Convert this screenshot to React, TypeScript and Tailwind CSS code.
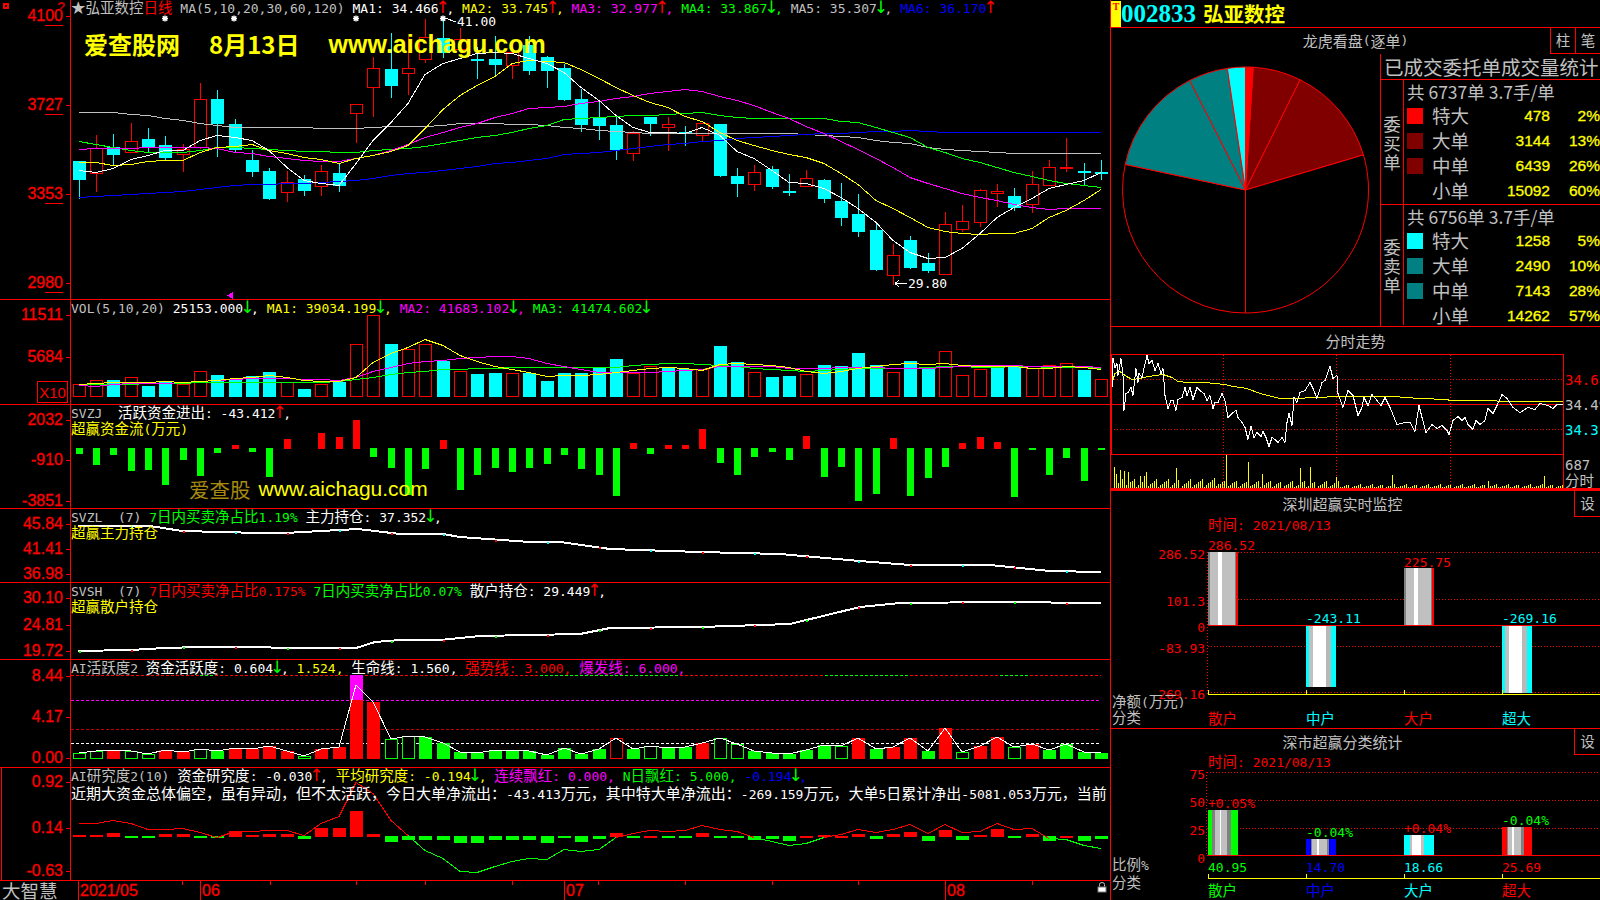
import React from 'react';

const RED = '#ff0000';
const CYAN = '#00ffff';
const GREEN = '#00ff00';
const YELLOW = '#ffff00';
const MAGENTA = '#ff00ff';
const BLUE = '#0000ff';
const GRAY = '#c0c0c0';

const cGray = 'text-[#c0c0c0]';
const cWhite = 'text-white';
const cRed = 'text-[#ff0000]';
const cGreen = 'text-[#00ff00]';
const cYellow = 'text-[#ffff00]';
const cMagenta = 'text-[#ff00ff]';
const cBlue = 'text-[#0000ff]';
const cCyan = 'text-[#00ffff]';

type Part = [string, string];

// the original mixes a half width latin face with a wider CJK face
const Rich = ({ parts, wide }: { parts: Part[]; wide?: boolean }) => (
  <>
    {parts.map(([text, color], i) =>
      text.split(/([\x20-\x7e]+)/).map((piece, j) => {
        const key = `${i}-${j}`;
        if (piece === '') return null;
        if (piece === '↑' || piece === '↓') {
          return (
            <span key={key} className={`inline-block w-[7.8px] font-['DejaVu_Sans',sans-serif] text-[17px] leading-[10px] ${color}`}>
              <span className="ml-[-3px]">{piece}</span>
            </span>
          );
        }
        if (/^[\x20-\x7e]+$/.test(piece)) {
          return (
            <span key={key} className={`font-['DejaVu_Sans_Mono',monospace] text-[13px] ${color}`}>
              {piece}
            </span>
          );
        }
        return (
          <span key={key} className={`${wide ? 'text-[15px]' : 'text-[14.5px]'} ${color}`}>
            {piece}
          </span>
        );
      }),
    )}
  </>
);

const X = (i: number) => Math.round(78.6 + 17.33 * i);
const poly = (pts: number[][]) => pts.map((p) => p.join(',')).join(' ');
const series = (ys: number[], f: (v: number) => number) => ys.map((v, i) => [X(i), Math.round(f(v)) + 0.5]);

// candles: [color, top, bottom, high, low], in 3x crop units
const candles: [string, number, number, number, number][] = [
  ['c', 484, 540, 484, 597], ['r', 443, 520, 405, 575], ['c', 441, 465, 402, 495], ['r', 424, 456, 370, 458],
  ['c', 417, 445, 384, 458], ['c', 435, 474, 408, 482], ['r', 446, 461, 432, 516], ['r', 298, 440, 250, 447],
  ['c', 297, 372, 270, 470], ['c', 372, 450, 357, 458], ['c', 480, 516, 450, 530], ['c', 513, 597, 505, 600],
  ['r', 547, 575, 513, 605], ['c', 537, 573, 526, 588], ['r', 514, 557, 495, 587], ['c', 519, 557, 491, 576],
  ['r', 313, 338, 313, 428], ['r', 205, 260, 172, 351], ['c', 207, 258, 99, 294], ['r', 205, 218, 110, 285],
  ['r', 110, 178, 58, 188], ['c', 113, 158, 50, 173], ['r', 118, 148, 85, 160], ['c', 177, 183, 140, 237],
  ['c', 177, 195, 108, 228], ['r', 155, 195, 130, 237], ['c', 135, 213, 108, 224], ['c', 171, 213, 168, 264],
  ['c', 204, 300, 192, 303], ['c', 297, 375, 267, 396], ['c', 353, 378, 305, 420], ['c', 375, 450, 350, 480],
  ['r', 400, 458, 393, 483], ['c', 351, 372, 351, 408], ['r', 373, 381, 351, 453], ['c', 396, 402, 378, 438],
  ['r', 370, 405, 368, 424], ['c', 372, 528, 372, 530], ['c', 528, 552, 504, 591], ['r', 517, 551, 495, 573],
  ['c', 507, 561, 498, 567], ['c', 573, 579, 522, 588], ['r', 533, 557, 510, 561], ['c', 540, 597, 537, 609],
  ['c', 603, 654, 549, 678], ['c', 642, 696, 582, 711], ['c', 690, 810, 666, 813], ['r', 766, 824, 732, 855],
  ['c', 720, 804, 708, 807], ['c', 789, 813, 759, 819], ['r', 673, 821, 636, 825], ['r', 664, 688, 615, 696],
  ['r', 571, 665, 567, 681], ['r', 574, 579, 552, 621], ['c', 588, 624, 564, 633], ['r', 553, 611, 513, 639],
  ['r', 502, 554, 480, 558], ['r', 501, 504, 414, 516], ['c', 513, 518, 489, 555], ['c', 516, 520, 480, 540],
];

const ma1 = [510, 515, 505, 478, 465, 450, 450, 420, 406, 410, 420, 450, 500, 540, 550, 555, 490, 420, 365, 310, 222, 190, 175, 160, 155, 160, 175, 190, 215, 260, 300, 345, 380, 395, 396, 398, 381, 405, 452, 475, 510, 547, 548, 565, 590, 625, 665, 720, 755, 775, 772, 745, 700, 650, 620, 595, 565, 552, 540, 517];
const ma2 = [487, 487, 494, 492, 484, 481, 481, 455, 440, 437, 432, 450, 460, 470, 478, 488, 475, 465, 452, 435, 385, 328, 285, 255, 228, 190, 180, 182, 185, 208, 235, 262, 285, 305, 322, 347, 362, 395, 420, 435, 450, 463, 472, 490, 520, 552, 600, 625, 650, 680, 692, 700, 703, 700, 698, 685, 652, 630, 600, 568];
const ma3 = [448, 445, 445, 445, 440, 440, 440, 440, 445, 455, 460, 468, 475, 480, 482, 484, 475, 465, 450, 432, 412, 395, 380, 368, 352, 340, 325, 322, 318, 310, 303, 295, 288, 280, 273, 268, 272, 287, 300, 315, 335, 355, 378, 400, 423, 447, 475, 500, 530, 548, 565, 578, 590, 600, 612, 620, 628, 625, 625, 625];
const ma4 = [424, 432, 440, 450, 455, 456, 455, 450, 442, 442, 445, 448, 450, 452, 453, 457, 457, 451, 448, 444, 437, 430, 420, 412, 405, 395, 385, 375, 358, 355, 350, 348, 346, 344, 342, 340, 337, 345, 352, 355, 355, 355, 355, 355, 362, 365, 380, 395, 410, 440, 457, 475, 487, 500, 515, 528, 540, 550, 555, 562];
const ma5 = [337, 337, 337, 342, 346, 353, 360, 368, 375, 380, 380, 380, 380, 380, 383, 385, 385, 380, 378, 377, 377, 375, 370, 370, 370, 372, 373, 375, 382, 385, 390, 392, 396, 398, 398, 398, 398, 398, 398, 398, 400, 400, 403, 405, 408, 410, 420, 425, 430, 442, 447, 450, 452, 455, 458, 458, 458, 458, 458, 458];
const ma6 = [590, 587, 585, 582, 578, 575, 572, 567, 560, 555, 553, 552, 550, 548, 545, 542, 540, 535, 525, 520, 515, 510, 505, 498, 490, 485, 480, 473, 462, 460, 455, 450, 445, 438, 433, 428, 422, 420, 415, 410, 408, 405, 403, 400, 398, 397, 394, 392, 391, 393, 397, 397, 397, 397, 397, 397, 397, 397, 397, 397];

const volTops: [string, number][] = [
  ['r', 268], ['r', 256], ['c', 255], ['r', 247], ['c', 272], ['c', 257], ['r', 268], ['r', 229], ['c', 240], ['c', 255],
  ['c', 243], ['c', 232], ['r', 262], ['c', 282], ['r', 268], ['c', 260], ['r', 148], ['r', 60], ['c', 147], ['r', 163],
  ['r', 148], ['c', 197], ['r', 229], ['c', 237], ['c', 233], ['r', 235], ['c', 235], ['c', 258], ['c', 234], ['c', 234],
  ['c', 215], ['c', 192], ['r', 235], ['r', 213], ['c', 218], ['c', 222], ['r', 222], ['c', 153], ['c', 201], ['r', 232],
  ['c', 246], ['c', 243], ['r', 238], ['c', 210], ['c', 213], ['c', 174], ['c', 210], ['r', 232], ['c', 198], ['c', 216],
  ['r', 169], ['r', 241], ['r', 223], ['c', 210], ['c', 210], ['r', 220], ['r', 211], ['r', 205], ['c', 225], ['r', 253],
];
const volA = [268, 265, 262, 260, 260, 258, 260, 258, 254, 250, 246, 240, 245, 255, 258, 258, 245, 200, 175, 155, 133, 150, 180, 198, 212, 222, 232, 242, 240, 240, 238, 232, 225, 220, 217, 218, 224, 207, 205, 208, 210, 215, 228, 235, 229, 218, 212, 208, 205, 208, 205, 210, 213, 212, 212, 220, 218, 214, 216, 222];
const volB = [270, 272, 268, 263, 265, 263, 262, 258, 255, 252, 250, 248, 250, 253, 253, 255, 245, 228, 215, 205, 198, 195, 190, 187, 183, 182, 190, 205, 212, 222, 232, 232, 232, 230, 229, 226, 222, 214, 212, 212, 214, 218, 220, 220, 216, 215, 217, 219, 218, 218, 215, 212, 209, 209, 209, 212, 214, 212, 214, 216];
const volC = [268, 268, 267, 266, 265, 265, 264, 262, 261, 262, 262, 262, 260, 260, 260, 258, 252, 245, 236, 232, 228, 223, 222, 220, 218, 217, 217, 217, 217, 217, 215, 215, 211, 208, 205, 205, 208, 210, 212, 218, 222, 226, 228, 224, 222, 220, 218, 218, 218, 215, 212, 214, 215, 215, 214, 214, 216, 216, 216, 218];

const svzj = [476, 510, 480, 528, 525, 570, 495, 543, 474, 450, 471, 546, 432, 459, 414, 426, 375, 486, 519, 600, 522, 435, 585, 540, 519, 531, 519, 507, 480, 522, 540, 603, 444, 477, 450, 450, 402, 504, 540, 486, 471, 495, 423, 546, 516, 618, 597, 429, 603, 549, 516, 444, 426, 441, 606, 465, 540, 489, 558, 465];

// 活跃度 bars: [color, s solid / o outline, top in 3x crop units]
const active: [string, string, number][] = [
  ['g', 'o', 730], ['g', 'o', 724], ['r', 's', 720], ['g', 'o', 724], ['g', 'o', 733], ['r', 's', 720], ['r', 's', 726], ['g', 'o', 718], ['g', 's', 724], ['r', 's', 714],
  ['r', 's', 718], ['r', 's', 708], ['r', 's', 723], ['g', 'o', 739], ['r', 's', 717], ['r', 's', 711], ['r', 's', 570], ['r', 's', 576], ['g', 'o', 688], ['g', 'o', 679],
  ['g', 's', 681], ['g', 's', 699], ['g', 's', 726], ['g', 's', 729], ['g', 's', 720], ['g', 's', 720], ['g', 's', 723], ['g', 's', 735], ['g', 's', 714], ['g', 's', 732],
  ['g', 's', 717], ['r', 'o', 685], ['g', 's', 717], ['g', 'o', 707], ['g', 's', 714], ['g', 's', 711], ['r', 's', 699], ['g', 'o', 685], ['g', 'o', 703], ['g', 's', 723],
  ['g', 's', 729], ['g', 's', 732], ['g', 's', 720], ['g', 's', 705], ['g', 'o', 709], ['r', 's', 684], ['g', 's', 717], ['r', 's', 711], ['r', 's', 684], ['g', 's', 723],
  ['r', 's', 654], ['g', 'o', 727], ['r', 's', 708], ['r', 's', 681], ['g', 'o', 712], ['r', 's', 702], ['g', 's', 720], ['g', 's', 702], ['g', 's', 726], ['g', 's', 729],
];

// 研究度 bars, height above (+) or below (-) the zero line, px
const study = [2, 1.5, 4, -2, -1, 3, 3, -2, -2, 6, 2, 3, 3, -3, 9, 9, 26, 3, -6, -4, -4, -4, -7, -7, -4, -4, -4, -7, -1, -6, -3, 4, -1, 1, -2, -1, 4, -2, -1, -4, -3, -5, 1, 2, 1, 3, -3, 3, 5, -5, 7, -4, 2, 8, -2, 3, -5, 1, -5, -3];
const studyLine = [189, 189, 181, 190, 208, 208, 205, 217, 230, 214, 214, 211, 211, 225, 190, 167, 66, 100, 180, 225, 270, 295, 333, 337, 318, 303, 295, 298, 0, 0, 0, 0, 0, 0, 0, 0, 0, 0, 0, 0, 0, 0, 0, 0, 0, 0, 0, 0, 0, 0, 0, 0, 0, 0, 0, 0, 0, 0, 0, 0].map((v) => 760 + v / 3);
[597, 604, 596, 560, 550, 541, 544, 540, 526, 536, 542, 562, 573, 585, 578, 560, 552, 538, 547, 536, 523, 550, 523, 547, 543, 520, 538, 535, 565, 567, 585, 593].forEach((v, i) => {
  studyLine[28 + i] = 650 + v / 3;
});

const fenshi = [[35, 185], [38, 100], [45, 125], [50, 115], [55, 150], [62, 98], [68, 150], [72, 255], [78, 205], [85, 200], [92, 185], [100, 210], [108, 130], [113, 170], [118, 145], [125, 155], [132, 130], [140, 90], [147, 115], [155, 105], [165, 135], [175, 115], [182, 145], [190, 130], [196, 210], [205, 250], [213, 225], [220, 225], [227, 255], [235, 222], [245, 215], [255, 185], [262, 210], [270, 185], [278, 222], [290, 185], [300, 195], [312, 205], [320, 225], [330, 210], [340, 250], [345, 232], [355, 230], [365, 205], [375, 225], [385, 275], [395, 265], [407, 255], [415, 275], [425, 290], [435, 305], [443, 343], [452, 303], [462, 335], [472, 320], [482, 333], [490, 318], [497, 335], [507, 362], [515, 335], [525, 342], [535, 350], [545, 335], [555, 350], [560, 290], [567, 265], [577, 300], [582, 215], [590, 232], [600, 200], [615, 195], [630, 172], [640, 190], [652, 218], [665, 170], [675, 165], [690, 122], [700, 160], [710, 150], [715, 205], [730, 245], [745, 195], [760, 210], [775, 270], [785, 245], [792, 215], [805, 240], [815, 208], [830, 225], [842, 240], [855, 215], [870, 245], [890, 298], [915, 290], [930, 290], [945, 318], [958, 240], [965, 275], [978, 320], [995, 298], [1010, 310], [1025, 300], [1040, 315], [1048, 328], [1058, 285], [1075, 272], [1085, 285], [1095, 275], [1105, 298], [1118, 312], [1128, 285], [1140, 298], [1155, 285], [1165, 250], [1180, 265], [1190, 240], [1205, 208], [1222, 220], [1240, 245], [1260, 262], [1285, 245], [1305, 252], [1320, 235], [1345, 240], [1360, 248], [1370, 238], [1390, 238]];
const fenshiAvg = [[35, 170], [45, 145], [60, 138], [75, 150], [95, 162], [120, 160], [145, 152], [190, 148], [215, 157], [235, 167], [265, 170], [315, 172], [375, 176], [400, 183], [440, 190], [480, 204], [540, 219], [580, 220], [650, 216], [710, 213], [880, 214], [960, 218], [1040, 221], [1050, 224], [1150, 224], [1230, 228], [1390, 228]];
const fenshiSpikes: Record<number, number> = { 380: 390, 443: 410, 226: 430, 600: 430, 628: 427, 487: 447, 139: 440, 40: 425, 60: 435, 340: 460, 710: 455, 878: 450, 1162: 468, 1333: 453, 72: 437, 50: 447, 84: 440, 118: 452, 130: 452 };
const fenshiBars = Array.from({ length: 226 }, (_, i) => {
  const zx = 36 + i * 6;
  const spike = Object.keys(fenshiSpikes).find((k) => Math.abs(Number(k) - zx) < 3);
  const room = zx < 360 ? 28 : zx < 720 ? 22 : 11;
  const top = spike ? fenshiSpikes[Number(spike)] : 490 - ((i * 37) % 17) * (room / 17) - 2;
  return { x: Math.round(1100 + zx / 3), top: Math.round(325 + top / 3) };
});

const Panel = ({
  top,
  className,
  ticks,
  legend,
  draw,
  over,
  axis,
  boxed,
  underline,
  wideSecond,
}: {
  top: number;
  className: string;
  ticks: [string, number][];
  legend: Part[][];
  draw: React.ReactNode;
  over?: React.ReactNode;
  axis?: React.ReactNode;
  boxed?: boolean;
  underline?: boolean;
  wideSecond?: boolean;
}) => {
  const h = Number(className.match(/\d+/)![0]) - 1;
  return (
    <div className={`flex shrink-0 border-b border-[#ff0000] ${className}`}>
      <div className={`relative shrink-0 border-r border-[#ff0000] ${boxed ? 'ml-px w-[70px] border-l' : 'w-[71px]'}`}>
        {ticks.map(([label, y]) => (
          <React.Fragment key={label}>
            <div
              className="absolute right-[7px] -translate-y-1/2 font-['Liberation_Sans',sans-serif] text-[16px] leading-[16px] text-[#ff0000] [-webkit-text-stroke:0.3px_#ff0000]"
              style={{ top: y - top }}
            >
              {label}
            </div>
            {underline && <div className="absolute right-[7px] h-px w-[18px] bg-[#ff0000]" style={{ top: y - top + 9 }} />}
            <div className="absolute right-0 h-px w-[4px] bg-[#ff0000]" style={{ top: y - top }} />
          </React.Fragment>
        ))}
        {axis}
      </div>
      <div className="relative flex-1 overflow-hidden">
        <svg className="block h-full w-full" viewBox={`71 ${top} 1039 ${h}`} shapeRendering="crispEdges">
          {draw}
        </svg>
        <div className="absolute left-0 top-[-2px] w-full font-['Noto_Sans_CJK_SC',sans-serif] leading-[16px]">
          {legend.map((line, i) => (
            <div key={i} className={`h-[16px] whitespace-pre ${wideSecond && i === 1 ? 'mt-[2px]' : ''}`}>
              <Rich parts={line} wide={wideSecond && i === 1} />
            </div>
          ))}
        </div>
        {over}
      </div>
    </div>
  );
};

const Legend = { up: ['↑', cRed] as Part, down: ['↓', cGreen] as Part };

const MainDraw = () => (
  <>
    {candles.map(([c, t, b, hi, lo], i) => {
      const x = X(i);
      const color = c === 'r' ? RED : CYAN;
      const top = Math.round(t / 3);
      const bot = Math.round(b / 3);
      return (
        <g key={i}>
          <rect x={x} y={Math.round(hi / 3)} width={1} height={Math.round(lo / 3) - Math.round(hi / 3)} fill={color} />
          {c === 'r' ? (
            <rect x={x - 5.5} y={top + 0.5} width={12} height={Math.max(bot - top, 1)} fill="#000" stroke={RED} />
          ) : (
            <rect x={x - 6} y={top} width={13} height={Math.max(bot - top, 2)} fill={CYAN} />
          )}
        </g>
      );
    })}
    {[
      [ma5, GRAY],
      [ma6, BLUE],
      [ma4, GREEN],
      [ma3, MAGENTA],
      [ma2, YELLOW],
      [ma1, '#ffffff'],
    ].map(([ys, color], i) => (
      <polyline key={i} points={poly(series(ys as number[], (v) => v / 3))} fill="none" stroke={color as string} strokeWidth={1} />
    ))}
    {[165, 234, 356, 443].map((x) => (
      <g key={x} stroke="#fff" strokeWidth={1.4} shapeRendering="auto">
        <path d={`M${x - 3} 18.5H${x + 3}M${x} 15.5V21.5M${x - 2.2} 16.3L${x + 2.2} 20.7M${x + 2.2} 16.3L${x - 2.2} 20.7`} />
      </g>
    ))}
    <path d="M445 18L456 22" stroke="#fff" />
    <path d="M895 283.5H907M895 283.5L899 280.5M895 283.5L899 286.5" stroke="#fff" fill="none" />
    <path d="M227 295.5L233 292V299Z" fill={MAGENTA} />
  </>
);

const VolDraw = () => (
  <>
    {volTops.map(([c, t], i) => {
      const x = X(i);
      const top = 295 + Math.round(t / 3);
      const bot = 396;
      return c === 'c' ? (
        <rect key={i} x={x - 6} y={top} width={13} height={bot - top + 1} fill={CYAN} />
      ) : (
        <rect key={i} x={x - 5.5} y={top + 0.5} width={12} height={bot - top} fill="none" stroke={RED} />
      );
    })}
    {[
      [volC, GREEN],
      [volB, MAGENTA],
      [volA, YELLOW],
    ].map(([ys, color], i) => (
      <polyline key={i} points={poly(series(ys as number[], (v) => 295 + v / 3))} fill="none" stroke={color as string} />
    ))}
  </>
);

const ZjDraw = () => (
  <>
    {svzj.map((v, i) => {
      const y = 295 + Math.round(v / 3);
      const zero = 448;
      return y >= zero ? (
        <rect key={i} x={X(i) - 3} y={zero} width={7} height={y - zero} fill={GREEN} />
      ) : (
        <rect key={i} x={X(i) - 3} y={y} width={7} height={zero - y + 1} fill={RED} />
      );
    })}
  </>
);

const zlLine = [[78, 526], [150, 526], [182, 531], [260, 533], [285, 533], [358, 529], [400, 534], [443, 534], [460, 537], [530, 542], [560, 542], [610, 549], [700, 552], [780, 554], [860, 561], [910, 565], [990, 565], [1050, 571], [1101, 572]];
const shLine = [[78, 651], [130, 650], [165, 648], [200, 647], [340, 648], [356, 648], [375, 642], [400, 640], [440, 640], [460, 638], [480, 636], [530, 635], [580, 634], [610, 628], [700, 627], [790, 624], [860, 607], [900, 603], [1000, 602], [1101, 603]];

const HoldDraw = ({ pts, seed }: { pts: number[][]; seed: number }) => (
  <>
    <polyline points={poly(pts)} fill="none" stroke="#fff" strokeWidth={2} />
    {Array.from({ length: 60 }, (_, i) => i)
      .filter((i) => (i * seed) % 3 === 0)
      .map((i) => {
        const x = X(i);
        const k = pts.findIndex((p) => p[0] >= x);
        const a = pts[Math.max(k - 1, 0)];
        const b = pts[k];
        const y = a[1] + ((b[1] - a[1]) * (x - a[0])) / Math.max(b[0] - a[0], 1);
        const color = seed === 7 ? (i % 2 ? CYAN : RED) : i % 2 ? RED : GREEN;
        return <rect key={i} x={x} y={Math.round(y)} width={2} height={2} fill={color} />;
      })}
  </>
);

const ActiveDraw = () => {
  const toY = (v: number) => 510 + Math.round(v / 3);
  const zero = 759;
  const dashes: [number, number, string][] = [
    [71, 200, RED], [200, 215, GREEN], [215, 540, RED], [540, 680, GREEN], [680, 825, RED], [825, 910, GREEN], [910, 1000, RED], [1000, 1030, GREEN], [1030, 1120, RED],
  ];
  return (
    <>
      {dashes.map(([a, b, c], i) => (
        <line key={i} x1={a} x2={Math.min(b, 1101)} y1={675.5} y2={675.5} stroke={c} strokeDasharray="3 2" />
      ))}
      <line x1={71} x2={1101} y1={700.5} y2={700.5} stroke={MAGENTA} strokeDasharray="3 2" />
      <line x1={71} x2={1101} y1={729.5} y2={729.5} stroke="#c00000" strokeDasharray="3 2" />
      <line x1={71} x2={1101} y1={743.5} y2={743.5} stroke="#fff" strokeDasharray="3 2" />
      {active.map(([c, k, t], i) => {
        const x = X(i);
        const y = toY(t);
        const color = c === 'r' ? RED : GREEN;
        return k === 's' ? (
          <rect key={i} x={x - 6} y={y} width={13} height={zero - y} fill={color} />
        ) : (
          <rect key={i} x={x - 5.5} y={y + 0.5} width={12} height={zero - y - 1} fill="#000" stroke={color} />
        );
      })}
      <rect x={X(16) - 6} y={675} width={13} height={25} fill={MAGENTA} />
      <polyline points={poly(active.map(([, , t], i) => [X(i), i === 16 ? 685 : toY(t)]))} fill="none" stroke="#fff" />
    </>
  );
};

const StudyDraw = () => {
  const zero = 837;
  return (
    <>
      {study.map((v, i) =>
        v > 0 ? (
          <rect key={i} x={X(i) - 6} y={zero - Math.round(v)} width={13} height={Math.max(Math.round(v), 2)} fill={RED} />
        ) : (
          <rect key={i} x={X(i) - 6} y={zero - 1} width={13} height={Math.max(Math.round(-v), 2)} fill={GREEN} />
        ),
      )}
      {studyLine.slice(1).map((y, i) => (
        <line
          key={i}
          x1={X(i)}
          x2={X(i + 1)}
          y1={Math.round(studyLine[i]) + 0.5}
          y2={Math.round(y) + 0.5}
          stroke={(studyLine[i] + y) / 2 > zero ? GREEN : RED}
        />
      ))}
    </>
  );
};

const Row = ({ swatch, name, value, pct }: { swatch?: string; name: string; value: string; pct: string }) => (
  <div className="flex h-[25px] items-center pl-[3px]">
    <div className="h-[16px] w-[16px] shrink-0" style={{ background: swatch }} />
    <div className="ml-[9px] w-[48px] text-[18.5px] leading-none text-[#c0c0c0]">{name}</div>
    <div className="w-[70px] text-right font-['Liberation_Sans',sans-serif] text-[15.5px] leading-none text-[#ffff00] [-webkit-text-stroke:0.3px_#ffff00]">{value}</div>
    <div className="w-[50px] text-right font-['Liberation_Sans',sans-serif] text-[15.5px] leading-none text-[#ffff00] [-webkit-text-stroke:0.3px_#ffff00]">{pct}</div>
  </div>
);

const OrderGroup = ({
  className,
  side,
  head,
  rows,
}: {
  className: string;
  side: string;
  head: string;
  rows: [string | undefined, string, string, string][];
}) => (
  <div className={`flex ${className}`}>
    <div className="flex w-[23px] shrink-0 flex-col items-center justify-center border-r border-[#ff0000] text-[17.5px] leading-[19px] text-[#c0c0c0]">
      {side.split('').map((s) => (
        <span key={s}>{s}</span>
      ))}
    </div>
    <div className="flex-1 overflow-hidden">
      <div className="flex h-[23px] items-center whitespace-pre pl-[3px] text-[17.5px] leading-none text-[#c0c0c0]">{head}</div>
      {rows.map((r) => (
        <Row key={r[1]} swatch={r[0]} name={r[1]} value={r[2]} pct={r[3]} />
      ))}
    </div>
  </div>
);

const pieSlice = (a: number, b: number, fill: string) => {
  const r = 123;
  const pt = (d: number) => {
    const t = (d * Math.PI) / 180;
    return `${(134.5 + r * Math.sin(t)).toFixed(1)} ${(136 - r * Math.cos(t)).toFixed(1)}`;
  };
  return <path key={a} d={`M134.5 136L${pt(a)}A${r} ${r} 0 ${b - a > 180 ? 1 : 0} 1 ${pt(b)}Z`} fill={fill} stroke={RED} />;
};

const Pie = () => (
  <svg className="h-[272px] w-[269px] shrink-0" viewBox="0 0 269 272">
    {pieSlice(3.6, 26.4, '#800000')}
    {pieSlice(26.4, 73.4, '#800000')}
    {pieSlice(73.4, 180, '#000000')}
    {pieSlice(180, 282, '#000000')}
    {pieSlice(282, 333, '#008080')}
    {pieSlice(333, 351.5, '#008080')}
    {pieSlice(351.5, 360, CYAN)}
    {pieSlice(0, 3.6, RED)}
  </svg>
);

const Title = ({ children, className }: { children: string; className: string }) => (
  <div className={`flex items-center justify-center whitespace-pre leading-none ${className}`}>
    <Rich parts={[[children, cGray]]} wide />
  </div>
);

const SetBox = () => (
  <div className="absolute right-0 top-0 flex h-[26px] w-[26px] items-center justify-center border-b border-l border-[#ff0000] text-[14.5px] leading-none text-[#c0c0c0]">
    设
  </div>
);

const Pin = ({ x, y, parts }: { x: number; y: number; parts: Part[] }) => (
  <div className="absolute -translate-y-1/2 whitespace-pre leading-none" style={{ left: x, top: y - 1.5 }}>
    <Rich parts={parts} />
  </div>
);

// one entry per column of the four-column bar charts
const Columns = ({ className, items }: { className: string; items: Part[] }) => (
  <div className={`absolute left-[97px] flex leading-none ${className}`}>
    {items.map((item, i) => (
      <div key={i} className="w-[98px] whitespace-pre">
        <Rich parts={[item]} />
      </div>
    ))}
  </div>
);

const stripedBar = (x: number, top: number, bottom: number, stripes: [number, string][]) => {
  let at = x;
  return stripes.map(([w, c], i) => {
    const el = <rect key={`${x}-${i}`} x={at} y={top} width={w} height={bottom - top} fill={c} />;
    at += w;
    return el;
  });
};

const fill = (edge: string, widths: number[], mid = '#c0c0c0', dark = '#808080'): [number, string][] => [
  [widths[0], edge],
  [widths[1], dark],
  [widths[2], mid],
  [widths[3], '#ffffff'],
  [widths[4], mid],
  [widths[5], dark],
  [widths[6], edge],
];

const dotted = { stroke: RED, strokeDasharray: '1 2' };

const MonitorSection = () => {
  const ox = 1111;
  const oy = 491;
  const ticks = [1208, 1306, 1404, 1502];
  return (
    <div className="relative h-[238px] border-b border-[#ff0000] font-['Noto_Sans_CJK_SC',sans-serif]">
      <Title className="h-[24px] pr-[26px]">深圳超赢实时监控</Title>
      <SetBox />
      <svg className="absolute left-0 top-0 h-[237px] w-[489px]" viewBox={`${ox} ${oy} 489 237`} shapeRendering="crispEdges">
        <line x1={1207.5} x2={1207.5} y1={552} y2={694} {...dotted} />
        <line x1={1208} x2={1600} y1={552.5} y2={552.5} {...dotted} />
        <line x1={1208} x2={1600} y1={599.5} y2={599.5} {...dotted} />
        <line x1={1208} x2={1600} y1={646.5} y2={646.5} {...dotted} />
        <line x1={1208} x2={1600} y1={692.5} y2={692.5} {...dotted} />
        <line x1={1208} x2={1600} y1={625.5} y2={625.5} stroke={RED} />
        {stripedBar(1208, 552, 625, [[2, '#808080'], [8, '#c0c0c0'], [4, '#ffffff'], [13, '#c0c0c0'], [1, '#808080'], [2, RED]])}
        {stripedBar(1404, 568, 625, [[2, '#808080'], [8, '#c0c0c0'], [4, '#ffffff'], [13, '#c0c0c0'], [1, '#808080'], [2, RED]])}
        {stripedBar(1306, 626, 687, [[3, CYAN], [4, '#c0c0c0'], [13, '#ffffff'], [5, '#b8b8b8'], [5, CYAN]])}
        {stripedBar(1502, 626, 693, [[3, CYAN], [4, '#c0c0c0'], [13, '#ffffff'], [5, '#b8b8b8'], [5, CYAN]])}
        <line x1={1208} x2={1600} y1={694.5} y2={694.5} stroke={YELLOW} />
        {ticks.map((t) => (
          <line key={t} x1={t + 0.5} x2={t + 0.5} y1={690} y2={695} stroke={YELLOW} />
        ))}
      </svg>
      <Pin x={1208 - ox} y={524 - oy} parts={[['时间: 2021/08/13', cRed]]} />
      <Pin x={1208 - ox} y={544 - oy} parts={[['286.52', cRed]]} />
      <Pin x={1404 - ox} y={561 - oy} parts={[['225.75', cRed]]} />
      <Pin x={1306 - ox} y={617 - oy} parts={[['-243.11', cCyan]]} />
      <Pin x={1502 - ox} y={617 - oy} parts={[['-269.16', cCyan]]} />
      {(
        [
          ['286.52', 553],
          ['101.3', 600],
          ['0', 626],
          ['-83.93', 647],
          ['-269.16', 693],
        ] as [string, number][]
      ).map(([t, y]) => (
        <Pin key={t} x={1205 - ox - t.length * 7.8} y={y - oy} parts={[[t, cRed]]} />
      ))}
      <Pin x={1112 - ox} y={701 - oy} parts={[['净额(万元)', cGray]]} />
      <Pin x={1112 - ox} y={717 - oy} parts={[['分类', cGray]]} />
      <Columns
        className="top-[218px]"
        items={[
          ['散户', cRed],
          ['中户', cCyan],
          ['大户', cRed],
          ['超大', cCyan],
        ]}
      />
    </div>
  );
};

const ShareSection = () => {
  const ox = 1111;
  const oy = 729;
  const ticks = [1208, 1306, 1404, 1502];
  return (
    <div className="relative flex-1 font-['Noto_Sans_CJK_SC',sans-serif]">
      <Title className="h-[24px] pr-[26px]">深市超赢分类统计</Title>
      <SetBox />
      <svg className="absolute left-0 top-0 h-[171px] w-[489px]" viewBox={`${ox} ${oy} 489 171`} shapeRendering="crispEdges">
        <line x1={1206.5} x2={1206.5} y1={772} y2={855} {...dotted} />
        <line x1={1207} x2={1600} y1={772.5} y2={772.5} {...dotted} />
        <line x1={1207} x2={1600} y1={800.5} y2={800.5} {...dotted} />
        <line x1={1207} x2={1600} y1={828.5} y2={828.5} {...dotted} />
        <line x1={1207} x2={1600} y1={855.5} y2={855.5} stroke={RED} />
        {stripedBar(1208, 810, 855, fill(GREEN, [4, 3, 5, 1, 6, 4, 7]))}
        {stripedBar(1306, 839, 855, fill(BLUE, [5, 1, 5, 2, 8, 2, 7]))}
        {stripedBar(1404, 835, 855, [[6, CYAN], [2, '#c0c0c0'], [9, '#ffffff'], [3, '#c0c0c0'], [10, CYAN]])}
        {stripedBar(1502, 827, 855, fill(RED, [5, 1, 4, 2, 7, 3, 8]))}
        <line x1={1208} x2={1600} y1={878.5} y2={878.5} stroke={YELLOW} />
        {ticks.map((t) => (
          <line key={t} x1={t + 0.5} x2={t + 0.5} y1={874} y2={879} stroke={YELLOW} />
        ))}
      </svg>
      <Pin x={1208 - ox} y={761 - oy} parts={[['时间: 2021/08/13', cRed]]} />
      {(
        [
          ['75', 773],
          ['50', 801],
          ['25', 829],
          ['0', 857],
        ] as [string, number][]
      ).map(([t, y]) => (
        <Pin key={t} x={1205 - ox - t.length * 7.8} y={y - oy} parts={[[t, cRed]]} />
      ))}
      <Pin x={1208 - ox} y={802 - oy} parts={[['+0.05%', cRed]]} />
      <Pin x={1306 - ox} y={831 - oy} parts={[['-0.04%', cGreen]]} />
      <Pin x={1404 - ox} y={827 - oy} parts={[['+0.04%', cRed]]} />
      <Pin x={1502 - ox} y={819 - oy} parts={[['-0.04%', cGreen]]} />
      <Columns
        className="top-[128px]"
        items={[
          ['40.95', cGreen],
          ['14.70', cBlue],
          ['18.66', cCyan],
          ['25.69', cRed],
        ]}
      />
      <Pin x={1112 - ox} y={864 - oy} parts={[['比例%', cGray]]} />
      <Pin x={1112 - ox} y={882 - oy} parts={[['分类', cGray]]} />
      <Columns
        className="top-[152px]"
        items={[
          ['散户', cGreen],
          ['中户', cBlue],
          ['大户', cCyan],
          ['超大', cRed],
        ]}
      />
    </div>
  );
};

const TrendSection = () => {
  const zx = (v: number) => 1100 + v / 3;
  const zy = (v: number) => 325 + v / 3;
  const pts = (a: number[][]) => a.map(([x, y]) => [Math.round(zx(x)), Math.round(zy(y)) + 0.5]);
  return (
    <div className="relative h-[164px] font-['Noto_Sans_CJK_SC',sans-serif]">
      <Title className="h-[27px]">分时走势</Title>
      <svg className="absolute left-0 top-0 h-[164px] w-[489px]" viewBox="1111 327 489 164" shapeRendering="crispEdges">
        <rect x={1111} y={354.5} width={452} height={100} fill="none" stroke={RED} />
        <line x1={1111} x2={1563} y1={379.5} y2={379.5} stroke={RED} strokeDasharray="1 2" />
        <line x1={1111} x2={1563} y1={429.5} y2={429.5} stroke={RED} strokeDasharray="1 2" />
        <line x1={1111} x2={1563} y1={404.5} y2={404.5} stroke={RED} />
        {[1223, 1336, 1450].map((x) => (
          <line key={x} x1={x + 0.5} x2={x + 0.5} y1={355} y2={489} stroke={RED} strokeDasharray="1 2" />
        ))}
        <line x1={1563.5} x2={1563.5} y1={455} y2={489} stroke={RED} />
        {fenshiBars.map((b, i) => (
          <rect key={i} x={b.x} y={b.top} width={1} height={Math.max(488 - b.top, 1)} fill={YELLOW} />
        ))}
        <polyline points={poly(pts(fenshiAvg))} fill="none" stroke={YELLOW} />
        <polyline points={poly(pts(fenshi))} fill="none" stroke="#ffffff" />
        <rect x={1111} y={488} width={489} height={3} fill={RED} />
      </svg>
      <div className="font-['DejaVu_Sans_Mono',monospace] text-[14px] leading-none">
        <div className="absolute left-[454px] top-[46px] text-[#ff0000]">34.68</div>
        <div className="absolute left-[454px] top-[71px] text-[#c0c0c0]">34.49</div>
        <div className="absolute left-[454px] top-[96px] text-[#00ffff]">34.31</div>
        <div className="absolute left-[454px] top-[131px] text-[#c0c0c0]">687</div>
      </div>
      <div className="absolute left-[454px] top-[146px] text-[14.5px] leading-none text-[#c0c0c0]">分时</div>
    </div>
  );
};

const RightColumn = () => (
  <div className="flex w-[490px] shrink-0 flex-col overflow-hidden border-l border-[#ff0000]">
    <div className="flex h-[28px] shrink-0 items-center whitespace-pre border-b border-[#ff0000]">
      <div className="flex h-[26px] w-[10px] items-start justify-center bg-[#ffff00] font-['Liberation_Serif',serif] text-[10px] font-bold leading-[12px] text-[#ff0000]">
        T
      </div>
      <span className="font-['Liberation_Serif',serif] text-[25px] font-bold leading-none text-[#00ffff]">002833</span>
      <span className="ml-[7px] font-['Noto_Sans_CJK_SC',serif] text-[20.5px] font-bold leading-none text-[#ffff00]">弘亚数控</span>
    </div>
    <div className="relative h-[299px] shrink-0 border-b border-[#ff0000] font-['Noto_Sans_CJK_SC',sans-serif]">
      <Title className="h-[25px]">龙虎看盘(逐单)</Title>
      <div className="absolute right-0 top-0 flex h-[26px] text-[14.5px] leading-none text-[#c0c0c0]">
        <div className="flex w-[25px] items-center justify-center border-b border-l border-[#ff0000]">柱</div>
        <div className="flex w-[25px] items-center justify-center border-b border-l border-[#ff0000]">笔</div>
      </div>
      <div className="mt-px flex">
        <Pie />
        <div className="w-[220px] overflow-hidden border-l border-[#ff0000]">
          <div className="flex h-[26px] items-center whitespace-pre border-b border-[#ff0000] pl-[3px] text-[19.5px] leading-none text-[#c0c0c0]">
            已成交委托单成交量统计
          </div>
          <OrderGroup
            className="h-[125px] border-b border-[#ff0000]"
            side="委买单"
            head="共 6737单 3.7手/单"
            rows={[
              [RED, '特大', '478', '2%'],
              ['#800000', '大单', '3144', '13%'],
              ['#800000', '中单', '6439', '26%'],
              [undefined, '小单', '15092', '60%'],
            ]}
          />
          <OrderGroup
            className="h-[120px]"
            side="委卖单"
            head="共 6756单 3.7手/单"
            rows={[
              [CYAN, '特大', '1258', '5%'],
              ['#008080', '大单', '2490', '10%'],
              ['#008080', '中单', '7143', '28%'],
              [undefined, '小单', '14262', '57%'],
            ]}
          />
        </div>
      </div>
    </div>
    <TrendSection />
    <MonitorSection />
    <ShareSection />
  </div>
);

export default function App() {
  return (
    <div className="flex h-[900px] w-[1600px] overflow-hidden bg-black">
      <div className="flex w-[1110px] shrink-0 flex-col">
        <Panel
          top={0}
          className="h-[300px]"
          underline
          ticks={[['4100', 16], ['3727', 105], ['3353', 194], ['2980', 283]]}
          axis={
            <>
              <div className="absolute left-[3px] top-[3px] h-[6px] w-[6px] border-2 border-[#ff0000]" />
              <div className="absolute left-[57px] top-[0px] font-['Liberation_Sans',sans-serif] text-[14px] font-bold leading-[14px] text-[#c00000]">?</div>
            </>
          }
          legend={[
            [
              ['★', cGray],
              ['弘亚数控', cGray],
              ['日线', cRed],
              [' MA(5,10,20,30,60,120) ', cGray],
              ['MA1: 34.466', cWhite],
              Legend.up,
              [', ', cWhite],
              ['MA2: 33.745', cYellow],
              Legend.up,
              [', ', cYellow],
              ['MA3: 32.977', cMagenta],
              Legend.up,
              [', ', cMagenta],
              ['MA4: 33.867', cGreen],
              Legend.down,
              [', ', cGreen],
              ['MA5: 35.307', cGray],
              Legend.down,
              [', ', cGray],
              ['MA6: 36.170', cBlue],
              Legend.up,
            ],
          ]}
          draw={<MainDraw />}
          over={
            <>
              <div className="absolute left-[13px] top-[30px] flex items-center gap-[29px] whitespace-pre font-['Noto_Sans_CJK_SC',sans-serif] text-[24px] font-bold leading-[28px] text-[#ffff00]">
                <span>爱查股网</span>
                <span>8月13日</span>
                <span className="font-['Liberation_Sans',sans-serif] text-[25px]">www.aichagu.com</span>
              </div>
              <div className="absolute left-[386px] top-[15px] font-['DejaVu_Sans_Mono',monospace] text-[13px] leading-none text-white">41.00</div>
              <div className="absolute left-[837px] top-[277px] font-['DejaVu_Sans_Mono',monospace] text-[13px] leading-none text-white">29.80</div>
            </>
          }
        />
        <Panel
          top={300}
          className="h-[105px]"
          ticks={[['11511', 315], ['5684', 357]]}
          axis={
            <div className="absolute left-[37px] top-[81px] flex h-[22px] w-[31px] items-center justify-center border border-[#ff0000] font-['Liberation_Sans',sans-serif] text-[15px] leading-none text-[#ff0000]">
              X10
            </div>
          }
          legend={[
            [
              ['VOL(5,10,20) ', cGray],
              ['25153.000', cWhite],
              Legend.down,
              [', ', cWhite],
              ['MA1: 39034.199', cYellow],
              Legend.down,
              [', ', cYellow],
              ['MA2: 41683.102', cMagenta],
              Legend.down,
              [', ', cMagenta],
              ['MA3: 41474.602', cGreen],
              Legend.down,
            ],
          ]}
          draw={<VolDraw />}
        />
        <Panel
          top={405}
          className="h-[104px]"
          ticks={[['2032', 420], ['-910', 460], ['-3851', 501]]}
          legend={[
            [
              ['SVZJ  ', cGray],
              ['活跃资金进出: -43.412', cWhite],
              Legend.up,
              [',', cWhite],
            ],
            [['超赢资金流(万元)', cYellow]],
          ]}
          draw={<ZjDraw />}
          over={
            <div className="absolute left-[118px] top-[70px] flex items-center gap-[8px] whitespace-pre text-[21px] leading-[28px]">
              <span className="font-['Noto_Sans_CJK_SC',sans-serif] text-[20.5px] text-[#a88a10]">爱查股</span>
              <span className="font-['Liberation_Sans',sans-serif] text-[#ffff00]">www.aichagu.com</span>
            </div>
          }
        />
        <Panel
          top={509}
          className="h-[74px]"
          ticks={[['45.84', 524], ['41.41', 549], ['36.98', 574]]}
          legend={[
            [
              ['SVZL  (7) ', cGray],
              ['7日内买卖净占比1.19%', cGreen],
              [' 主力持仓: 37.352', cWhite],
              Legend.down,
              [',', cWhite],
            ],
            [['超赢主力持仓', cYellow]],
          ]}
          draw={<HoldDraw pts={zlLine} seed={7} />}
        />
        <Panel
          top={583}
          className="h-[77px]"
          ticks={[['30.10', 598], ['24.81', 625], ['19.72', 651]]}
          legend={[
            [
              ['SVSH  (7) ', cGray],
              ['7日内买卖净占比0.175%', cRed],
              [' ', cRed],
              ['7日内买卖净占比0.07%', cGreen],
              [' 散户持仓: 29.449', cWhite],
              Legend.up,
              [',', cWhite],
            ],
            [['超赢散户持仓', cYellow]],
          ]}
          draw={<HoldDraw pts={shLine} seed={5} />}
        />
        <Panel
          top={660}
          className="h-[108px]"
          ticks={[['8.44', 676], ['4.17', 717], ['0.00', 758]]}
          legend={[
            [
              ['AI活跃度2 ', cGray],
              ['资金活跃度: 0.604', cWhite],
              Legend.down,
              [', ', cWhite],
              ['1.524, ', cYellow],
              ['生命线: 1.560, ', cWhite],
              ['强势线: 3.000, ', cRed],
              ['爆发线: 6.000,', cMagenta],
            ],
          ]}
          draw={<ActiveDraw />}
        />
        <Panel
          top={768}
          className="h-[113px]"
          boxed
          wideSecond
          ticks={[['0.92', 782], ['0.14', 828], ['-0.63', 871]]}
          legend={[
            [
              ['AI研究度2(10) ', cGray],
              ['资金研究度: -0.030', cWhite],
              Legend.up,
              [', ', cWhite],
              ['平均研究度: -0.194', cYellow],
              Legend.down,
              [', ', cYellow],
              ['连续飘红: 0.000, ', cMagenta],
              ['N日飘红: 5.000, ', cGreen],
              ['-0.194', cBlue],
              Legend.down,
              [',', cBlue],
            ],
            [['近期大资金总体偏空，虽有异动，但不太活跃，今日大单净流出：-43.413万元，其中特大单净流出：-269.159万元，大单5日累计净出-5081.053万元，当前', cWhite]],
          ]}
          draw={<StudyDraw />}
        />
        <div className="relative flex flex-1 items-center font-['Noto_Sans_CJK_SC',sans-serif]">
          <div className="w-[78px] pl-[2px] text-[18.5px] leading-none text-[#c0c0c0]">大智慧</div>
          {[78, 200, 564, 945].map((x) => (
            <div key={x} className="absolute top-0 h-full w-px bg-[#ff0000]" style={{ left: x }} />
          ))}
          {[182, 270, 356, 425, 512, 598, 685, 772, 858, 1032].map((x) => (
            <div key={x} className="absolute top-0 h-[4px] w-px bg-[#ff0000]" style={{ left: x }} />
          ))}
          {(
            [
              ['2021/05', 80],
              ['06', 202],
              ['07', 566],
              ['08', 947],
            ] as [string, number][]
          ).map(([t, x]) => (
            <div key={t} className="absolute top-[1px] font-['Liberation_Sans',sans-serif] text-[16px] leading-[18px] text-[#ff0000] [-webkit-text-stroke:0.3px_#ff0000]" style={{ left: x }}>
              {t}
            </div>
          ))}
          <svg className="absolute left-[1097px] top-[1px] h-[11px] w-[10px]" viewBox="0 0 10 11">
            <path d="M2.5 4.5V2.5a2.5 2 0 0 1 5 0V4.5" fill="none" stroke="#c0c0c0" />
            <rect x={1} y={5} width={8} height={5} fill="#fff" stroke="#808080" />
          </svg>
        </div>
      </div>
      <RightColumn />
    </div>
  );
}
